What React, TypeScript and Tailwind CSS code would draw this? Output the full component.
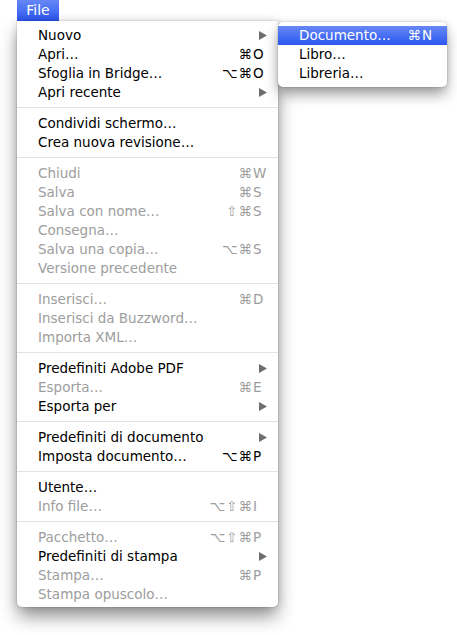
type Entry =
  | { label: string; disabled?: boolean; mods?: string; keyChar?: string; sub?: boolean }
  | "sep"

const fileMenu: Entry[] = [
  { label: "Nuovo", sub: true },
  { label: "Apri…", mods: "⌘", keyChar: "O" },
  { label: "Sfoglia in Bridge…", mods: "⌥⌘", keyChar: "O" },
  { label: "Apri recente", sub: true },
  "sep",
  { label: "Condividi schermo…" },
  { label: "Crea nuova revisione…" },
  "sep",
  { label: "Chiudi", disabled: true, mods: "⌘", keyChar: "W" },
  { label: "Salva", disabled: true, mods: "⌘", keyChar: "S" },
  { label: "Salva con nome…", disabled: true, mods: "⇧⌘", keyChar: "S" },
  { label: "Consegna…", disabled: true },
  { label: "Salva una copia…", disabled: true, mods: "⌥⌘", keyChar: "S" },
  { label: "Versione precedente", disabled: true },
  "sep",
  { label: "Inserisci…", disabled: true, mods: "⌘", keyChar: "D" },
  { label: "Inserisci da Buzzword…", disabled: true },
  { label: "Importa XML…", disabled: true },
  "sep",
  { label: "Predefiniti Adobe PDF", sub: true },
  { label: "Esporta…", disabled: true, mods: "⌘", keyChar: "E" },
  { label: "Esporta per", sub: true },
  "sep",
  { label: "Predefiniti di documento", sub: true },
  { label: "Imposta documento…", mods: "⌥⌘", keyChar: "P" },
  "sep",
  { label: "Utente…" },
  { label: "Info file…", disabled: true, mods: "⌥⇧⌘", keyChar: "I" },
  "sep",
  { label: "Pacchetto…", disabled: true, mods: "⌥⇧⌘", keyChar: "P" },
  { label: "Predefiniti di stampa", sub: true },
  { label: "Stampa…", disabled: true, mods: "⌘", keyChar: "P" },
  { label: "Stampa opuscolo…", disabled: true },
]

function SubArrow() {
  return (
    <svg width="8" height="9" viewBox="0 0 8 9" className="shrink-0">
      <path d="M0 0L8 4.5L0 9Z" fill="#6e6e6e" />
    </svg>
  )
}

function Shortcut({ mods, keyChar }: { mods: string; keyChar: string }) {
  return (
    <div className="flex items-center">
      <span className="text-right tracking-[1px]">{mods}</span>
      <span className="w-[14px] text-left">{keyChar}</span>
    </div>
  )
}

export default function App() {
  return (
    <div className="w-[457px] h-[635px] bg-white overflow-hidden font-['DejaVu_Sans',sans-serif] text-[13.5px] text-black">
      <div className="pl-[17px]">
        {/* Menu bar title */}
        <div className="w-[42px] h-[21px] bg-gradient-to-b from-[#6787f6] to-[#2b55f0] text-white text-[14px] leading-[21px] text-center">
          File
        </div>

        <div className="flex items-start">
          {/* Main menu */}
          <div className="w-[261px] bg-white pt-[5px] pb-[3px] rounded-b-[5px] shadow-[0_0_0_1px_rgba(0,0,0,0.06),0_10px_18px_-1px_rgba(0,0,0,0.45),0_0_8px_rgba(0,0,0,0.12)]">
            {fileMenu.map((e, i) =>
              e === "sep" ? (
                <div key={i} className="h-[12px] pt-[5px]">
                  <div className="h-px bg-[#e3e3e3]" />
                </div>
              ) : (
                <div
                  key={i}
                  className={`h-[19px] leading-[19px] pl-[21px] pr-[11px] flex items-center justify-between whitespace-nowrap ${
                    e.disabled ? "text-[#9d9d9d]" : "text-black"
                  }`}
                >
                  <span>{e.label}</span>
                  {e.sub && <SubArrow />}
                  {e.mods && e.keyChar && <Shortcut mods={e.mods} keyChar={e.keyChar} />}
                </div>
              )
            )}
          </div>

          {/* Nuovo submenu */}
          <div className="w-[169px] mt-[1px] bg-white py-[4px] rounded-[5px] shadow-[0_0_0_1px_rgba(0,0,0,0.06),0_8px_14px_-1px_rgba(0,0,0,0.4),0_0_6px_rgba(0,0,0,0.1)]">
            <div className="h-[19px] leading-[19px] pl-[21px] pr-[11px] flex items-center justify-between bg-gradient-to-b from-[#6787f6] to-[#2b55f0] text-white">
              <span>Documento…</span>
              <Shortcut mods="⌘" keyChar="N" />
            </div>
            <div className="h-[19px] leading-[19px] pl-[21px] pr-[11px]">Libro…</div>
            <div className="h-[19px] leading-[19px] pl-[21px] pr-[11px]">Libreria…</div>
          </div>
        </div>
      </div>
    </div>
  )
}
